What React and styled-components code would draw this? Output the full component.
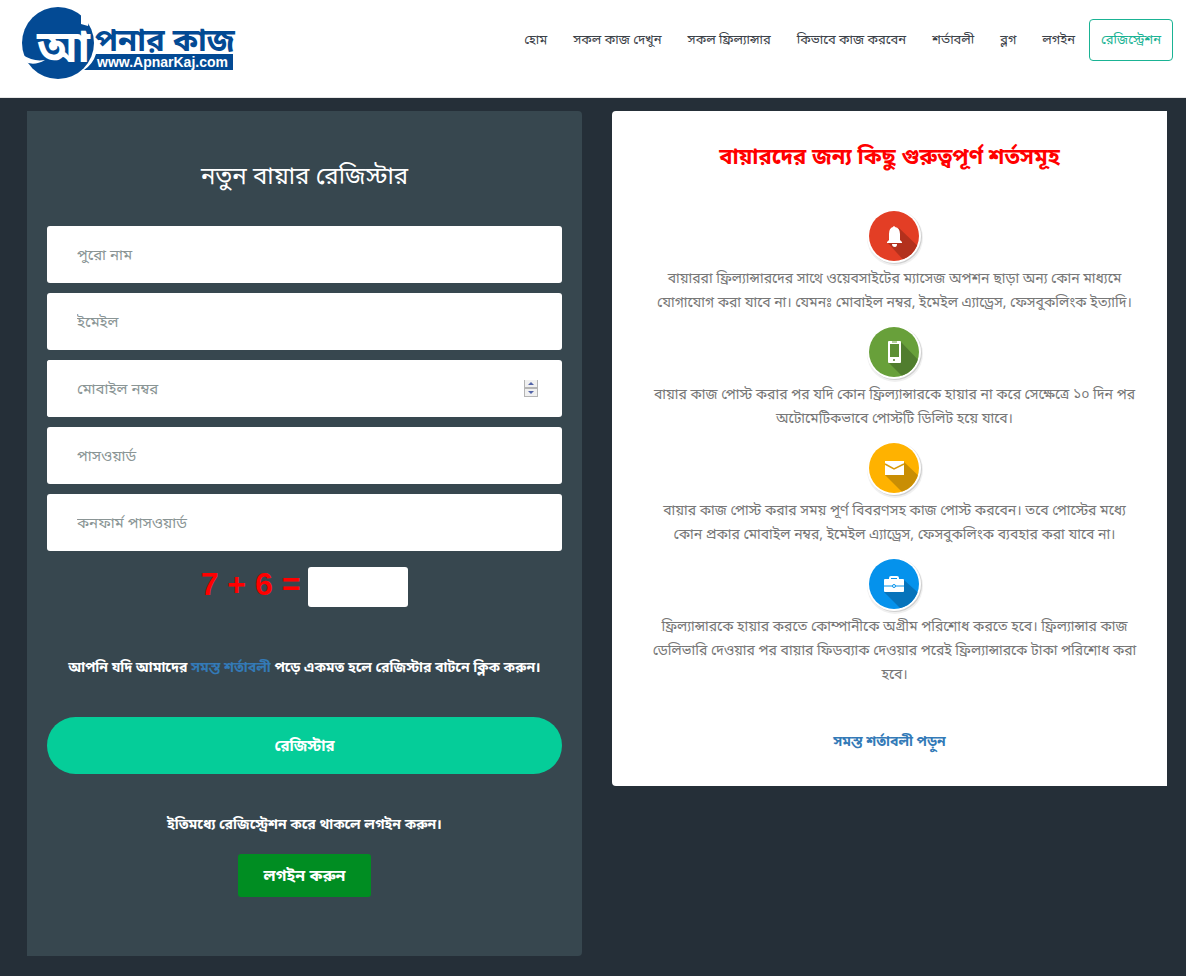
import React, { useState } from "react";
import styled, { createGlobalStyle } from "styled-components";

const GlobalStyle = createGlobalStyle`
  * {
    box-sizing: border-box;
  }

  body {
    margin: 0;
    background: #252f38;
    color: #777;
    font-family: "Noto Sans Bengali", "Noto Sans", "Liberation Sans", sans-serif;
    font-size: 14px;
    line-height: 24px;
  }

  a {
    color: #337ab7;
    text-decoration: none;
  }
`;

const Header = styled.header`
  display: flex;
  justify-content: space-between;
  align-items: flex-start;
  height: 98px;
  padding: 0 13px 0 20px;
  background: #fff;
  border-bottom: 1px solid #e7e7e7;
`;

const LogoLink = styled.a`
  display: block;
  padding-top: 6px;
`;

const Nav = styled.nav`
  display: flex;
  align-items: center;
  gap: 26px;
  padding-top: 19px;
`;

const NavLink = styled.a`
  padding-top: 1px;
  color: #3b4148;
  font-size: 13px;
  line-height: 39px;
  white-space: nowrap;
`;

const RegisterLink = styled(NavLink)`
  margin-left: -12px;
  padding: 1px 11px 0;
  color: #1ab394;
  border: 1px solid #1ab394;
  border-radius: 4px;
`;

const Main = styled.main`
  display: grid;
  grid-template-columns: 1fr 1fr;
  align-items: start;
  gap: 30px;
  padding: 13px 19px 20px 27px;
`;

const FormPanel = styled.form`
  display: flex;
  flex-direction: column;
  align-items: center;
  padding: 49px 20px 59px;
  background: #37474f;
  border-radius: 0 4px 4px 0;
`;

const FormTitle = styled.h1`
  margin: 0 0 30px;
  color: #fff;
  font-size: 24px;
  font-weight: 400;
  line-height: 36px;
`;

const Field = styled.input`
  display: block;
  width: 100%;
  height: 57px;
  margin-bottom: 10px;
  padding: 2px 30px 0;
  background: #fff;
  border: none;
  border-radius: 3px;
  font-family: inherit;
  font-size: 15px;

  &::placeholder {
    color: #8a9595;
  }
`;

const NumberBox = styled.div`
  display: flex;
  align-items: center;
  width: 100%;
  height: 57px;
  margin-bottom: 10px;
  padding-right: 24px;
  background: #fff;
  border-radius: 3px;
`;

const NumberField = styled(Field)`
  flex: 1;
  margin: 0;
  appearance: textfield;

  &::-webkit-inner-spin-button {
    appearance: none;
  }
`;

const Spinner = styled.div`
  display: flex;
  flex-direction: column;
  gap: 2px;
  padding: 0 1px 1px;
  background: #b4b4b4;
`;

const SpinButton = styled.button`
  display: flex;
  align-items: center;
  justify-content: center;
  width: 12px;
  height: 7px;
  padding: 0;
  background: #f0f0f0;
  border: none;
`;

const Captcha = styled.label`
  display: flex;
  align-items: flex-start;
  gap: 8px;
  padding-top: 6px;
  color: #f00;
  font-family: "Liberation Sans", Arial, sans-serif;
  font-size: 32px;
  font-weight: 700;
  line-height: 34px;
`;

const CaptchaInput = styled.input`
  width: 100px;
  height: 40px;
  padding: 0 10px;
  background: #fff;
  border: none;
  border-radius: 3px;
  font-size: 15px;
`;

const Note = styled.p`
  margin: ${(props) => props.$margin};
  color: #fff;
  font-weight: 700;
  text-align: center;
`;

const SubmitButton = styled.button`
  width: 100%;
  height: 57px;
  padding-top: 3px;
  background: #05cd99;
  color: #fff;
  border: none;
  border-radius: 29px;
  font-family: inherit;
  font-size: 15px;
  font-weight: 700;
  cursor: pointer;
`;

const LoginLink = styled.a`
  padding: 3px 25px 0;
  background: #008d22;
  color: #fff;
  border-radius: 3px;
  font-size: 16px;
  font-weight: 700;
  line-height: 40px;
`;

const TermsPanel = styled.section`
  display: flex;
  flex-direction: column;
  align-items: center;
  padding: 30px 20px 31px;
  background: #fff;
  border-radius: 4px 0 0 4px;
  text-align: center;
`;

const TermsTitle = styled.h2`
  margin: 0 0 31px;
  color: #f00;
  font-size: 22px;
  font-weight: 700;
  line-height: 36px;
`;

const Term = styled.article`
  display: flex;
  flex-direction: column;
  align-items: center;
  padding: 0 7px 0 17px;
`;

const TermText = styled.p`
  margin: 2px 0 8px;
`;

const AllTerms = styled.a`
  margin-top: 35px;
  font-weight: 700;
`;

function Logo() {
  return (
    <svg width="222" height="76" viewBox="0 0 222 76" role="img" aria-label="আপনার কাজ">
      <path d="M76 48h137v16H64q9-6 12-16z" fill="#034a94" />
      <circle cx="38" cy="37" r="37" fill="#fff" />
      <circle cx="38" cy="37" r="36" fill="#034a94" />
      <path d="M61 0h20v27q-4-6-9-7l-3-6l-1 6l-7-2z" fill="#fff" />
      <path d="M3 49q10 7 22 5q-12 7-21 1z" fill="#fff" />
      <text x="17" y="56" fill="#fff" fontSize="44" fontWeight="700">আ</text>
      <text x="75" y="45" fill="#034a94" fontSize="31" fontWeight="700">পনার কাজ</text>
      <text x="77" y="61" fill="#fff" fontSize="14" fontWeight="700" fontFamily="Liberation Sans, Arial, sans-serif">
        www.ApnarKaj.com
      </text>
    </svg>
  );
}

const badges = {
  bell: {
    color: "#e33e25",
    shade: "#b3311d",
    shadow: "M21 34l20 22h20V47L33 20z",
    drawing: (
      <path d="M27 19q1-2 2 0q5 1 5 7v6l2 2v1H21v-1l2-2v-6q0-6 4-7zM26 36h5q0 3-2 3q-3 0-3-3z" fill="#fff" />
    ),
  },
  phone: {
    color: "#68a03a",
    shade: "#507d2e",
    shadow: "M22 38l18 18h20V44L35 18z",
    drawing: (
      <>
        <rect x="22" y="17" width="13" height="22" rx="1" fill="#fff" />
        <rect x="24" y="20" width="9" height="13" fill="#5c9034" />
        <path d="M26 18h5" stroke="#68a03a" />
        <circle cx="28" cy="36" r="1" fill="#507d2e" />
      </>
    ),
  },
  mail: {
    color: "#ffb200",
    shade: "#c98e04",
    shadow: "M19 35l20 20h20V42L38 22z",
    drawing: (
      <>
        <rect x="19" y="21" width="19" height="14" fill="#fff" />
        <path d="M19 24l9 5l10-5" fill="none" stroke="#d99a0a" strokeWidth="1.5" />
      </>
    ),
  },
  briefcase: {
    color: "#0592ec",
    shade: "#0673bb",
    shadow: "M18 36l20 20h20V42L38 24z",
    drawing: (
      <>
        <path d="M24 24v-2q0-1 1-1h6q1 0 1 1v2" fill="none" stroke="#fff" strokeWidth="2" />
        <rect x="18" y="23" width="20" height="13" rx="1" fill="#fff" />
        <path d="M18 30h20" stroke="#0592ec" />
        <circle cx="28" cy="30" r="1.5" fill="#fff" stroke="#0592ec" />
      </>
    ),
  },
};

function Badge({ name }) {
  const badge = badges[name];
  return (
    <svg width="58" height="58" viewBox="0 0 58 58" aria-hidden="true">
      <clipPath id={`clip-${name}`}>
        <circle cx="28" cy="28" r="25" />
      </clipPath>
      <circle cx="29" cy="30" r="28" fill="#f0f0f0" />
      <circle cx="29" cy="29" r="27" fill="#cfcfcf" />
      <circle cx="28" cy="28" r="27" fill="#fff" />
      <circle cx="28" cy="28" r="25" fill={badge.color} />
      <path d={badge.shadow} fill={badge.shade} clipPath={`url(#clip-${name})`} />
      {badge.drawing}
    </svg>
  );
}

const navItems = [
  "হোম",
  "সকল কাজ দেখুন",
  "সকল ফ্রিল্যান্সার",
  "কিভাবে কাজ করবেন",
  "শর্তাবলী",
  "ব্লগ",
  "লগইন",
];

const terms = [
  {
    icon: "bell",
    text: "বায়াররা ফ্রিল্যান্সারদের সাথে ওয়েবসাইটের ম্যাসেজ অপশন ছাড়া অন্য কোন মাধ্যমে যোগাযোগ করা যাবে না। যেমনঃ মোবাইল নম্বর, ইমেইল এ্যাড্রেস, ফেসবুকলিংক ইত্যাদি।",
  },
  {
    icon: "phone",
    text: "বায়ার কাজ পোস্ট করার পর যদি কোন ফ্রিল্যান্সারকে হায়ার না করে সেক্ষেত্রে ১০ দিন পর অটোমেটিকভাবে পোস্টটি ডিলিট হয়ে যাবে।",
  },
  {
    icon: "mail",
    text: "বায়ার কাজ পোস্ট করার সময় পূর্ণ বিবরণসহ কাজ পোস্ট করবেন। তবে পোস্টের মধ্যে কোন প্রকার মোবাইল নম্বর, ইমেইল এ্যাড্রেস, ফেসবুকলিংক ব্যবহার করা যাবে না।",
  },
  {
    icon: "briefcase",
    text: "ফ্রিল্যান্সারকে হায়ার করতে কোম্পানীকে অগ্রীম পরিশোধ করতে হবে। ফ্রিল্যান্সার কাজ ডেলিভারি দেওয়ার পর বায়ার ফিডব্যাক দেওয়ার পরেই ফ্রিল্যান্সারকে টাকা পরিশোধ করা হবে।",
  },
];

function App() {
  const [mobile, setMobile] = useState("");

  const stepMobile = (amount) => {
    setMobile(String(Number(mobile) + amount));
  };

  return (
    <>
      <GlobalStyle />
      <Header>
        <LogoLink href="#"><Logo /></LogoLink>
        <Nav>
          {navItems.map((item) => (
            <NavLink href="#" key={item}>{item}</NavLink>
          ))}
          <RegisterLink href="#">রেজিস্ট্রেশন</RegisterLink>
        </Nav>
      </Header>
      <Main>
        <FormPanel onSubmit={(e) => e.preventDefault()}>
          <FormTitle>নতুন বায়ার রেজিস্টার</FormTitle>
          <Field type="text" placeholder="পুরো নাম" aria-label="পুরো নাম" />
          <Field type="email" placeholder="ইমেইল" aria-label="ইমেইল" />
          <NumberBox>
            <NumberField
              type="number"
              placeholder="মোবাইল নম্বর"
              aria-label="মোবাইল নম্বর"
              value={mobile}
              onChange={(e) => setMobile(e.target.value)}
            />
            <Spinner>
              <SpinButton type="button" aria-label="+" onClick={() => stepMobile(1)}>
                <svg width="6" height="3"><path d="M0 3l3-3l3 3z" fill="#5364a8" /></svg>
              </SpinButton>
              <SpinButton type="button" aria-label="-" onClick={() => stepMobile(-1)}>
                <svg width="6" height="3"><path d="M0 0h6l-3 3z" fill="#5364a8" /></svg>
              </SpinButton>
            </Spinner>
          </NumberBox>
          <Field type="password" placeholder="পাসওয়ার্ড" aria-label="পাসওয়ার্ড" />
          <Field type="password" placeholder="কনফার্ম পাসওয়ার্ড" aria-label="কনফার্ম পাসওয়ার্ড" />
          <Captcha>
            7 + 6 =
            <CaptchaInput type="text" />
          </Captcha>
          <Note $margin="50px 0 36px">
            আপনি যদি আমাদের <a href="#">সমস্ত শর্তাবলী</a> পড়ে একমত হলে রেজিস্টার বাটনে ক্লিক করুন।
          </Note>
          <SubmitButton type="submit">রেজিস্টার</SubmitButton>
          <Note $margin="40px 0 16px">ইতিমধ্যে রেজিস্ট্রেশন করে থাকলে লগইন করুন।</Note>
          <LoginLink href="#">লগইন করুন</LoginLink>
        </FormPanel>
        <TermsPanel>
          <TermsTitle>বায়ারদের জন্য কিছু গুরুত্বপূর্ণ শর্তসমূহ</TermsTitle>
          {terms.map((term) => (
            <Term key={term.icon}>
              <Badge name={term.icon} />
              <TermText>{term.text}</TermText>
            </Term>
          ))}
          <AllTerms href="#">সমস্ত শর্তাবলী পড়ুন</AllTerms>
        </TermsPanel>
      </Main>
    </>
  );
}

export default App;
